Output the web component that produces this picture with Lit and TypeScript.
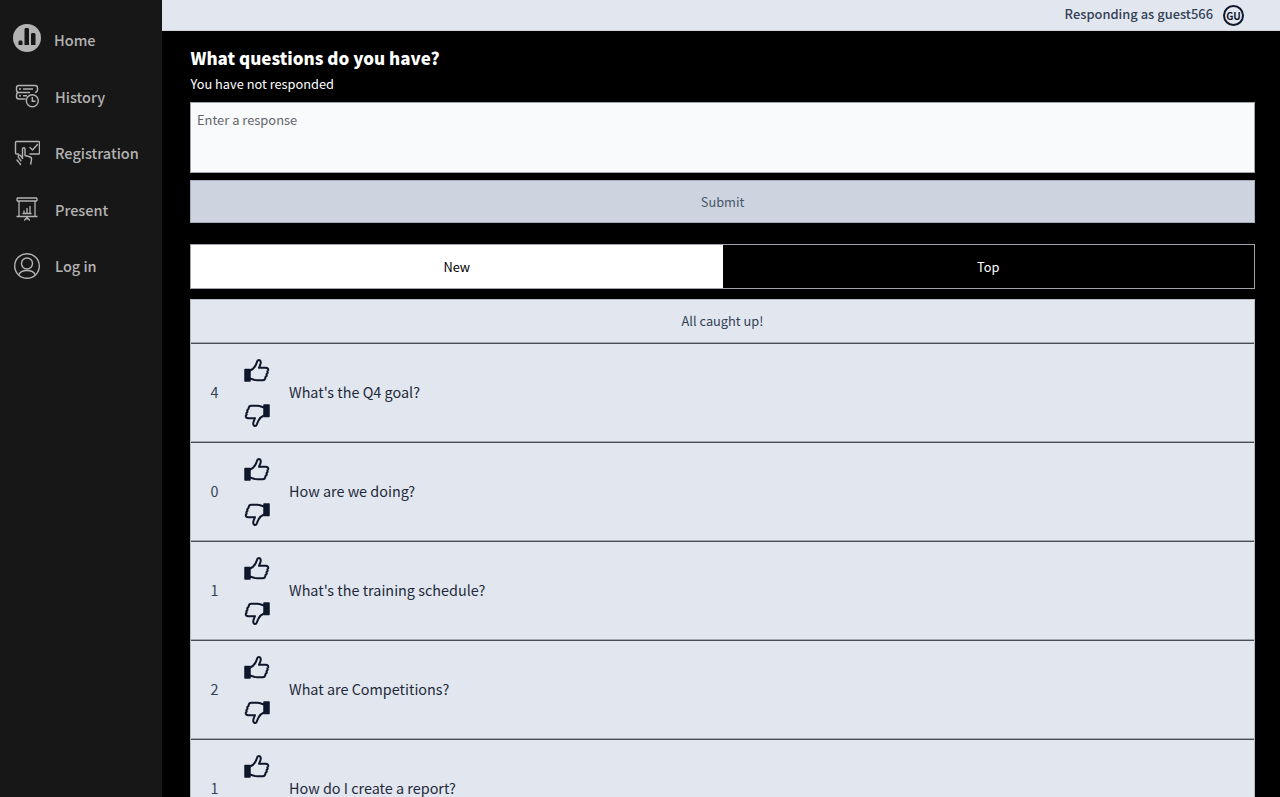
import { LitElement, html, css, svg } from "lit";
import { customElement } from "lit/decorators.js";

const thumb = svg`<path d="M1 10.500h5v11.500H1z" fill="currentColor" stroke="currentColor" stroke-width="1.500" stroke-linejoin="round"/><path d="M6 11.500c2.500-1 4.500-3 5.500-5 .8-1.500 1.300-3.500 2.300-5.200 1.700-.7 3 .3 3 2 0 1.800-1 3.500-1.800 5.500h6.700c1.800 0 2.800 1 2.500 2.500l-.9 1 .4 1.500-1.200 1.400.3 1.500-1.300 1.300c-.1 2-1.100 3.300-2.800 3.300H13c-2.600 0-4.600-1-7-1.800" fill="none" stroke="currentColor" stroke-width="2" stroke-linejoin="round" stroke-linecap="round"/>`;

const icons: Record<string, unknown> = {
  Home: svg`<svg class="ic home" width="28" height="28" viewBox="0 0 28 28"><circle cx="14" cy="14" r="14" fill="#b3b3b3"/><path d="M5.500 21v-3c0-.8.6-1.500 1.500-1.500h1c.8 0 1.500.7 1.500 1.500v3zM11.500 21V5.500c0-1 .6-1.500 1.500-1.500h1.500c1 0 1.500.5 1.500 1.500V21zM18 21V10.500c0-.9.6-1.500 1.500-1.500h1.500c.9 0 1.500.6 1.500 1.500V21z" fill="#171717"/></svg>`,
  History: svg`<svg class="ic" width="26" height="26" viewBox="0 0 26 26" fill="none" stroke="#b3b3b3" stroke-width="1.400"><path d="M21 9.500c1.500-.3 2.500-1.300 2.500-2.800V5c0-1.500-1-2.500-2.500-2.500H5C3.500 2.500 2.500 3.500 2.500 5v1.700c0 1.500 1 2.800 2.500 2.800h11M5 9.500c-1.500 0-2.500 1.200-2.500 2.700v1.300c0 1.500 1 2.500 2.500 2.500h6.500"/><path d="M6 6h.01M6 12.800h.01" stroke-width="2" stroke-linecap="round"/><path d="M9 6h10M9 12.800h4"/><circle cx="18.300" cy="17.800" r="6"/><path d="M18.300 14v4.200h3.200"/></svg>`,
  Registration: svg`<svg class="ic" width="26" height="26" viewBox="0 0 26 26" fill="none" stroke="#b3b3b3" stroke-width="1.400" stroke-linecap="round" stroke-linejoin="round"><path d="M4.500 14H2.500c-.6 0-1-.4-1-1V2.500c0-.6.400-1 1-1h22c.6 0 1 .4 1 1V13c0 .6-.4 1-1 1H16"/><path d="M16 7.500l2.500 2.500L23.500 4.500"/><path d="M8.500 18.500V9c0-1.600 2.500-1.600 2.500 0v6.500l4.500 1.200c1.500.4 2.300 1.500 2 3l-.8 4.300"/><path d="M8.500 18L6.500 15.500c-1.300-1.300-3 .2-2 1.800l2.500 3.500M3 20l1.500 2M5.500 23l1 1.500"/></svg>`,
  Present: svg`<svg class="ic" width="26" height="26" viewBox="0 0 26 26" fill="none" stroke="#b3b3b3" stroke-width="1.300"><path d="M3 2h20M3 5h20M3 2v3M23 2v3M5 5v15.500M21 5v15.500M2.500 20.500h21M13 20.500v3M13 21.500l-2.800 3M13 21.500l2.800 3"/><path d="M8.500 17.500h9M10 17v-2.500M13 17v-5M16 17v-7"/></svg>`,
  "Log in": svg`<svg class="ic" width="26" height="26" viewBox="0 0 26 26" fill="none" stroke="#b3b3b3" stroke-width="1.400"><circle cx="13" cy="13" r="12.300"/><circle cx="13" cy="10.500" r="5.500"/><path d="M4.800 21.800c1-3 3.700-4.300 8.200-4.300s7.200 1.300 8.200 4.300"/></svg>`,
};

const rows: [number, string][] = [
  [4, "What's the Q4 goal?"],
  [0, "How are we doing?"],
  [1, "What's the training schedule?"],
  [2, "What are Competitions?"],
  [1, "How do I create a report?"],
];

@customElement("app-root")
export class AppRoot extends LitElement {
  static styles = css`
    :host { display: block; height: 797px; overflow: hidden; background: #000; font-family: "Noto Sans CJK SC", "Noto Sans", sans-serif; }
    .page { display: flex; height: 797px; }
    .side { width: 162px; flex: none; background: #171717; padding-top: 11.500px; box-sizing: border-box; }
    .nav { display: flex; align-items: center; height: 56.500px; padding-left: 14px; gap: 15px; color: #b3b3b3; font-size: 14.500px; font-weight: 500; box-sizing: border-box; }
    .ic { flex: none; }
    .home { margin: -3px -2px 0 -1px; }
    .main { flex: 1; min-width: 0; display: flex; flex-direction: column; }
    .top { height: 31px; flex: none; box-sizing: border-box; background: #e2e7ef; border-bottom: 1px solid #cfd3d9; display: flex; align-items: center; justify-content: flex-end; padding-right: 36px; gap: 10px; color: #334155; font-size: 12.900px; font-weight: 500; }
    .top span { margin-bottom: 3px; }
    .avatar { width: 21px; height: 21px; margin-top: 1px; border: 2px solid #0f172a; border-radius: 50%; display: flex; align-items: center; justify-content: center; font-size: 10px; line-height: 14px; font-weight: 700; color: #0f172a; box-sizing: border-box; }
    .content { padding: 0 25px 0 28px; display: flex; flex-direction: column; }
    h1 { margin: 15px 0 0; padding-left: 0.500px; font-size: 17px; line-height: 24px; font-weight: 900; color: #fff; }
    .status { font-size: 12.800px; line-height: 20px; color: #fff; margin-top: 4px; padding-left: 0.500px; }
    .input { margin-top: 8px; height: 71px; box-sizing: border-box; background: #f8fafc; border: 1px solid #a0a4aa; padding: 7px 6px; font-size: 12.900px; line-height: 19px; color: #64666b; }
    .submit { margin-top: 7px; height: 43px; box-sizing: border-box; background: #cdd4e0; border: 1px solid #a3adbb; padding-bottom: 1px; display: flex; align-items: center; justify-content: center; font-size: 12.800px; color: #475569; }
    .tabs { margin-top: 21px; height: 45px; display: flex; box-sizing: border-box; border: 1px solid #a0a4aa; }
    .tab { flex: 1; display: flex; align-items: center; justify-content: center; padding-bottom: 1px; font-size: 12.800px; color: #fff; }
    .tab.on { background: #fff; color: #000; }
    .list { margin-top: 10px; border: 1px solid #b6bac1; border-bottom: 0; background: #e2e7ef; }
    .caught { height: 43px; padding-bottom: 2px; box-sizing: border-box; display: flex; align-items: center; justify-content: center; font-size: 12.800px; color: #334155; }
    .row { height: 99px; box-sizing: border-box; border-top: 1px solid #4a4f57; box-shadow: 0 -1px 0 #a4a9b1; display: flex; align-items: center; color: #0f172a; }
    .score { width: 47px; padding-bottom: 3px; text-align: center; font-size: 14.400px; color: #334155; flex: none; }
    .votes { width: 37px; flex: none; display: flex; flex-direction: column; align-items: center; gap: 20px; margin-bottom: 1px; color: #0f172a; }
    .q { margin-left: 14px; padding-bottom: 3px; font-size: 14.400px; color: #1e293b; }
    .down { transform: rotate(180deg); }
  `;

  render() {
    return html`<div class="page">
      <aside class="side">
        ${Object.keys(icons).map((k) => html`<div class="nav">${icons[k]}<span>${k}</span></div>`)}
      </aside>
      <main class="main">
        <div class="top"><span>Responding as guest566</span><div class="avatar">GU</div></div>
        <div class="content">
          <h1>What questions do you have?</h1>
          <div class="status">You have not responded</div>
          <div class="input">Enter a response</div>
          <div class="submit">Submit</div>
          <div class="tabs"><div class="tab on">New</div><div class="tab">Top</div></div>
          <div class="list">
            <div class="caught">All caught up!</div>
            ${rows.map(([n, q]) => html`<div class="row">
              <div class="score">${n}</div>
              <div class="votes">
                <svg width="26" height="24" viewBox="0 0 26 24">${thumb}</svg>
                <svg class="down" width="26" height="24" viewBox="0 0 26 24">${thumb}</svg>
              </div>
              <div class="q">${q}</div>
            </div>`)}
          </div>
        </div>
      </main>
    </div>`;
  }
}
